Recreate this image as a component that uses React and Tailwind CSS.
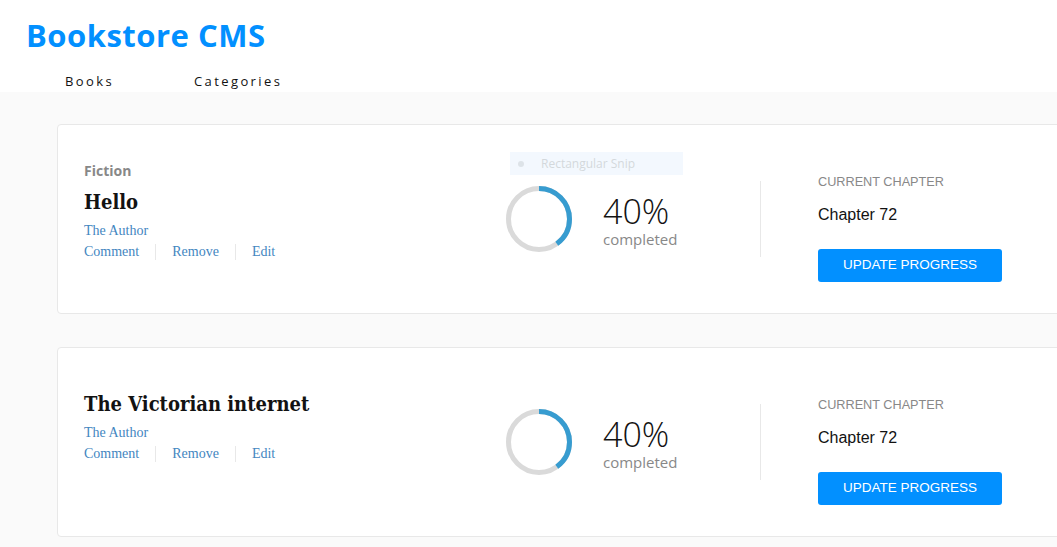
import React from "react";

const books = [
  { id: 1, category: "Fiction", title: "Hello", author: "The Author", progress: 40, chapter: "Chapter 72" },
  { id: 2, category: "", title: "The Victorian internet", author: "The Author", progress: 40, chapter: "Chapter 72" },
];

function Ring({ percent }) {
  const r = 30.5;
  const c = 2 * Math.PI * r;
  return (
    <svg width="66" height="66" viewBox="0 0 66 66" className="shrink-0">
      <circle cx="33" cy="33" r={r} fill="none" stroke="#dadada" strokeWidth="5" />
      <circle
        cx="33"
        cy="33"
        r={r}
        fill="none"
        stroke="#379cd0"
        strokeWidth="5"
        strokeDasharray={`${(c * percent) / 100} ${c}`}
        transform="rotate(-90 33 33)"
      />
    </svg>
  );
}

function BookCard({ book, snip }) {
  return (
    <div className="relative flex h-[190px] w-[1030px] shrink-0 rounded-[4px] border border-[#e8e8e8] bg-white pl-[26px]">
      {snip && (
        <div className="absolute left-[452px] top-[27px] flex h-[23px] w-[173px] items-center bg-[#f3f8fe] pl-[8px] font-['Open_Sans',sans-serif] text-[12px] text-[#d3d8dc]">
          <span className="mr-[17px] h-[6px] w-[6px] rounded-full bg-[#dde3e8]"></span>
          Rectangular Snip
        </div>
      )}
      <div className={`flex w-[422px] flex-col ${book.category ? "pt-[36px]" : "pt-[35px]"}`}>
        {book.category && (
          <div className="font-['Open_Sans',sans-serif] text-[14px] font-bold leading-[20px] text-[#888]">{book.category}</div>
        )}
        <h2 className="mt-[7px] font-['DejaVu_Serif',serif] text-[20px] font-bold leading-[28px] text-[#121212] font-stretch-condensed">{book.title}</h2>
        <div className="mt-[6px] font-['Liberation_Serif',serif] text-[14px] leading-[18px] text-[#4386bf]">{book.author}</div>
        <div className="mt-[3px] flex items-center font-['Liberation_Serif',serif] text-[14px] leading-[18px] text-[#4386bf]">
          <button className="pr-[16px]">Comment</button>
          <span className="h-[16px] w-px bg-[#e8e8e8]"></span>
          <button className="px-[16px]">Remove</button>
          <span className="h-[16px] w-px bg-[#e8e8e8]"></span>
          <button className="pl-[16px]">Edit</button>
        </div>
      </div>
      <div className="flex items-center">
        <Ring percent={book.progress} />
        <div className="ml-[31px] flex w-[157px] flex-col font-['Open_Sans',sans-serif]">
          <span className="text-[34px] font-light leading-[40px] text-[#121212]">{book.progress}%</span>
          <span className="text-[15px] leading-[16px] text-[#888]">completed</span>
        </div>
        <div className="h-[76px] w-px bg-[#e8e8e8]"></div>
      </div>
      <div className="ml-[57px] flex flex-col pt-[49px] font-['Liberation_Sans',sans-serif]">
        <span className="text-[12.7px] leading-[16px] text-[#888]">CURRENT CHAPTER</span>
        <span className="mt-[16px] text-[16px] leading-[18px] text-[#121212]">{book.chapter}</span>
        <button className="mt-[25px] h-[33px] w-[184px] rounded-[3px] bg-[#0290ff] text-[13.5px] text-white">UPDATE PROGRESS</button>
      </div>
    </div>
  );
}

export default function App() {
  return (
    <div className="min-h-[547px] w-[1057px] overflow-hidden bg-[#fafafa]">
      <header className="bg-white pl-[26px]">
        <h1 className="pt-[15px] font-['Open_Sans',sans-serif] text-[31px] font-bold leading-[40px] tracking-[0.5px] text-[#0290ff]">Bookstore CMS</h1>
        <nav className="flex pl-[39px] pt-[16px] font-['Open_Sans',sans-serif] text-[13px] leading-[21px] tracking-[2.4px] text-[#121212]">
          <a className="w-[129px]">Books</a>
          <a>Categories</a>
        </nav>
      </header>
      <main className="flex flex-col gap-[33px] pl-[57px] pt-[32px]">
        {books.map((b, i) => (
          <BookCard key={b.id} book={b} snip={i === 0} />
        ))}
      </main>
    </div>
  );
}
